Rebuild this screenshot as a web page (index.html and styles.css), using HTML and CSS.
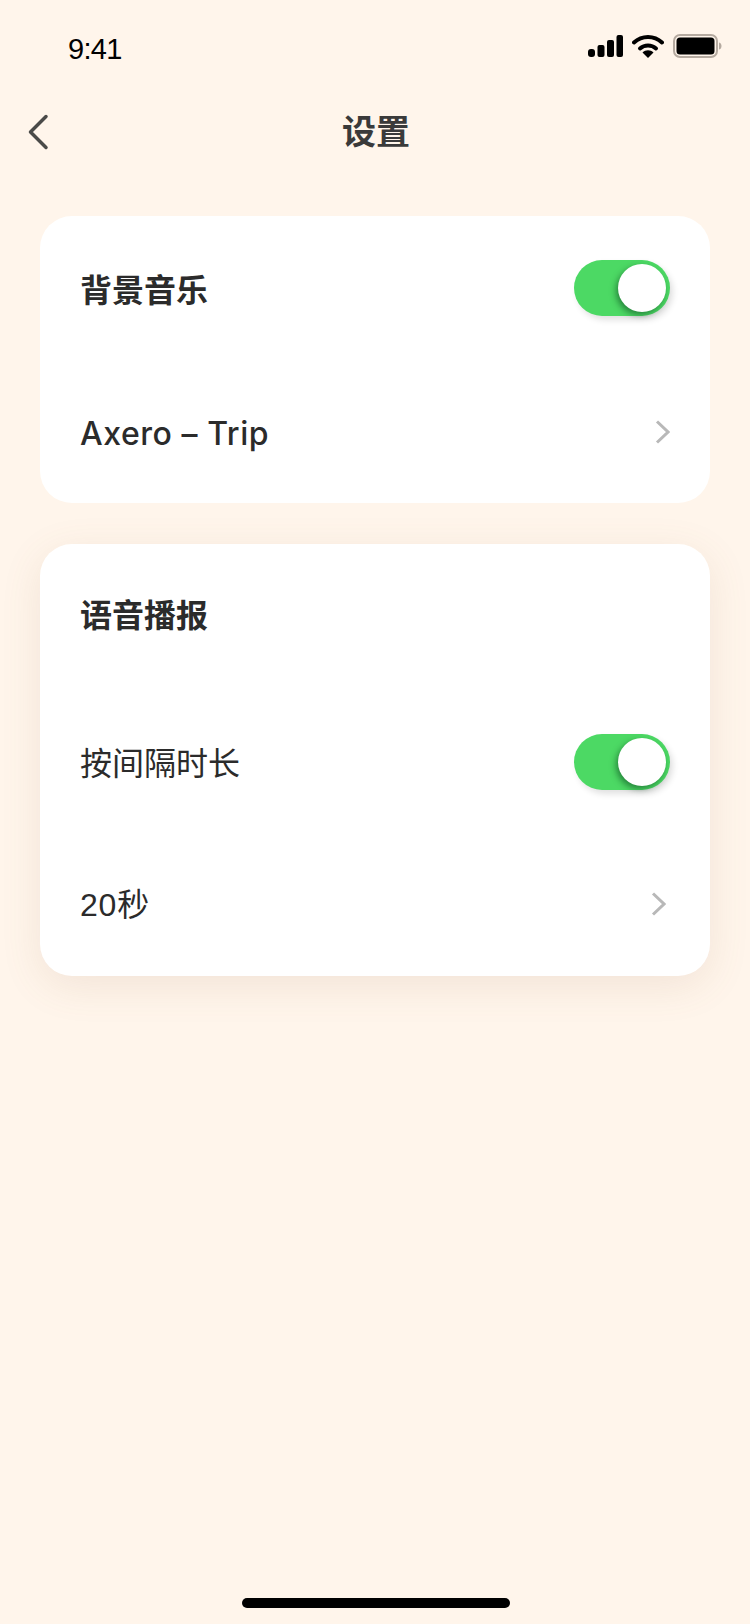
FILE: index.html
```html
<!DOCTYPE html>
<html lang="zh-CN">
<head>
  <meta charset="UTF-8">
  <meta name="viewport" content="width=device-width, initial-scale=1.0">
  <title>设置</title>
  <link rel="stylesheet" href="styles.css">
</head>
<body>
  <div class="page">
    <div class="status-bar">
      <span class="clock">9:41</span>
      <div class="status-icons">
        <svg width="35" height="22" viewBox="0 0 35 22">
          <rect x="0" y="14" width="7" height="8" rx="3" fill="#000"/>
          <rect x="9.500" y="10" width="7" height="12" rx="2" fill="#000"/>
          <rect x="19" y="5" width="7" height="17" rx="2" fill="#000"/>
          <rect x="28.500" y="0" width="6.500" height="22" rx="2" fill="#000"/>
        </svg>
        <svg width="32" height="24" viewBox="0 0 32 24">
          <path d="M2 8.500C10 1 22 1 30 8.500" fill="none" stroke="#000" stroke-width="4" stroke-linecap="round"/>
          <path d="M8 14.500C12.500 10.500 19.500 10.500 24 14.500" fill="none" stroke="#000" stroke-width="4" stroke-linecap="round"/>
          <path d="M10.500 18.500L16 24L21.500 18.500C18.500 15.500 13.500 15.500 10.500 18.500Z" fill="#000"/>
        </svg>
        <svg width="49" height="24" viewBox="0 0 49 24">
          <rect x="1" y="1" width="43" height="22" rx="6" fill="none" stroke="#b5aaa0" stroke-width="2"/>
          <rect x="3.500" y="3.500" width="38" height="17" rx="3.500" fill="#000"/>
          <path d="M46 8.500C48 9 48.500 10.500 48.500 12C48.500 13.500 48 15 46 15.500Z" fill="#b5aaa0"/>
        </svg>
      </div>
    </div>

    <header class="nav">
      <a class="back" href="#">
        <svg width="22" height="36" viewBox="0 0 22 36">
          <path d="M19 2.500L3.500 18L19 33.500" fill="none" stroke="#4a4a48" stroke-width="3.500" stroke-linecap="round" stroke-linejoin="round"/>
        </svg>
      </a>
      <h1>设置</h1>
    </header>

    <main class="content">
      <section class="card">
        <div class="row row-music">
          <span class="label strong">背景音乐</span>
          <span class="switch"><span class="knob"></span></span>
        </div>
        <div class="row row-track">
          <span class="label medium">Axero – Trip</span>
          <svg class="chevron" width="16" height="24" viewBox="0 0 16 24">
            <path d="M3 1.500L14 12L3 22.500" fill="none" stroke="#b8b8b8" stroke-width="3"/>
          </svg>
        </div>
      </section>

      <section class="card card-shadow">
        <div class="row row-voice">
          <span class="label strong">语音播报</span>
        </div>
        <div class="row row-interval">
          <span class="label plain">按间隔时长</span>
          <span class="switch"><span class="knob"></span></span>
        </div>
        <div class="row row-time">
          <span class="label plain-low">20秒</span>
          <svg class="chevron chevron-inset" width="16" height="24" viewBox="0 0 16 24">
            <path d="M3 1.500L14 12L3 22.500" fill="none" stroke="#b8b8b8" stroke-width="3"/>
          </svg>
        </div>
      </section>
    </main>

    <div class="home-bar"></div>
  </div>
</body>
</html>
```

FILE: styles.css
```css
* {
  box-sizing: border-box;
}

body {
  margin: 0;
  background-color: #fff5eb;
  color: #2b2b2b;
  font-family: "Liberation Sans", "Noto Sans CJK SC", sans-serif;
}

.page {
  display: flex;
  flex-direction: column;
  width: 750px;
  height: 1624px;
}

/* Status bar */
.status-bar {
  display: flex;
  justify-content: space-between;
  align-items: center;
  height: 96px;
  padding: 0 28px 0 68px;
}

.clock {
  color: #000;
  font-size: 29px;
  letter-spacing: -0.7px;
  margin-top: 2px;
}

.status-icons {
  display: flex;
  align-items: center;
  gap: 9px;
  margin-bottom: 4px;
}

/* Title row */
.nav {
  position: relative;
  display: flex;
  justify-content: center;
  align-items: center;
  height: 72px;
  padding: 0 0 5px 2px;
}

.nav h1 {
  margin: 0;
  color: #3a3a3a;
  font-size: 34px;
  font-weight: 700;
}

.back {
  position: absolute;
  left: 27px;
  top: 18px;
  display: flex;
}

/* Cards */
.content {
  display: flex;
  flex-direction: column;
  gap: 41px;
  padding: 48px 40px 0;
}

.card {
  background-color: #fff;
  border-radius: 32px;
}

.card-shadow {
  box-shadow: 0 10px 40px rgba(150, 110, 70, 0.12);
}

.row {
  display: flex;
  justify-content: space-between;
  align-items: center;
  padding: 0 40px;
}

.row-music {
  height: 144px;
}

.row-track {
  height: 143px;
}

.row-voice {
  height: 138px;
}

.row-interval {
  height: 160px;
}

.row-time {
  height: 134px;
  padding-bottom: 10px;
}

.label {
  font-size: 32px;
}

.strong {
  font-weight: 700;
}

.medium {
  margin-top: 4px;
  font-family: "Inter", "Noto Sans CJK SC", sans-serif;
  font-weight: 500;
  letter-spacing: 0.55px;
}

.plain {
  margin-bottom: 3px;
}

.plain-low {
  margin-bottom: 4px;
  letter-spacing: 0.8px;
}

/* Toggle */
.switch {
  display: flex;
  justify-content: flex-end;
  align-items: center;
  width: 96px;
  height: 56px;
  padding-right: 4px;
  border-radius: 28px;
  background-color: #4cd964;
  box-shadow: 3px 4px 6px rgba(0, 0, 0, 0.12);
}

.knob {
  width: 48px;
  height: 48px;
  border-radius: 50%;
  background-color: #fff;
  box-shadow: -2px 3px 6px rgba(0, 50, 20, 0.5);
}

.chevron-inset {
  margin-right: 4px;
}

/* Home indicator */
.home-bar {
  width: 268px;
  height: 10px;
  margin: auto 0 16px 242px;
  border-radius: 5px;
  background-color: #000;
}
```
